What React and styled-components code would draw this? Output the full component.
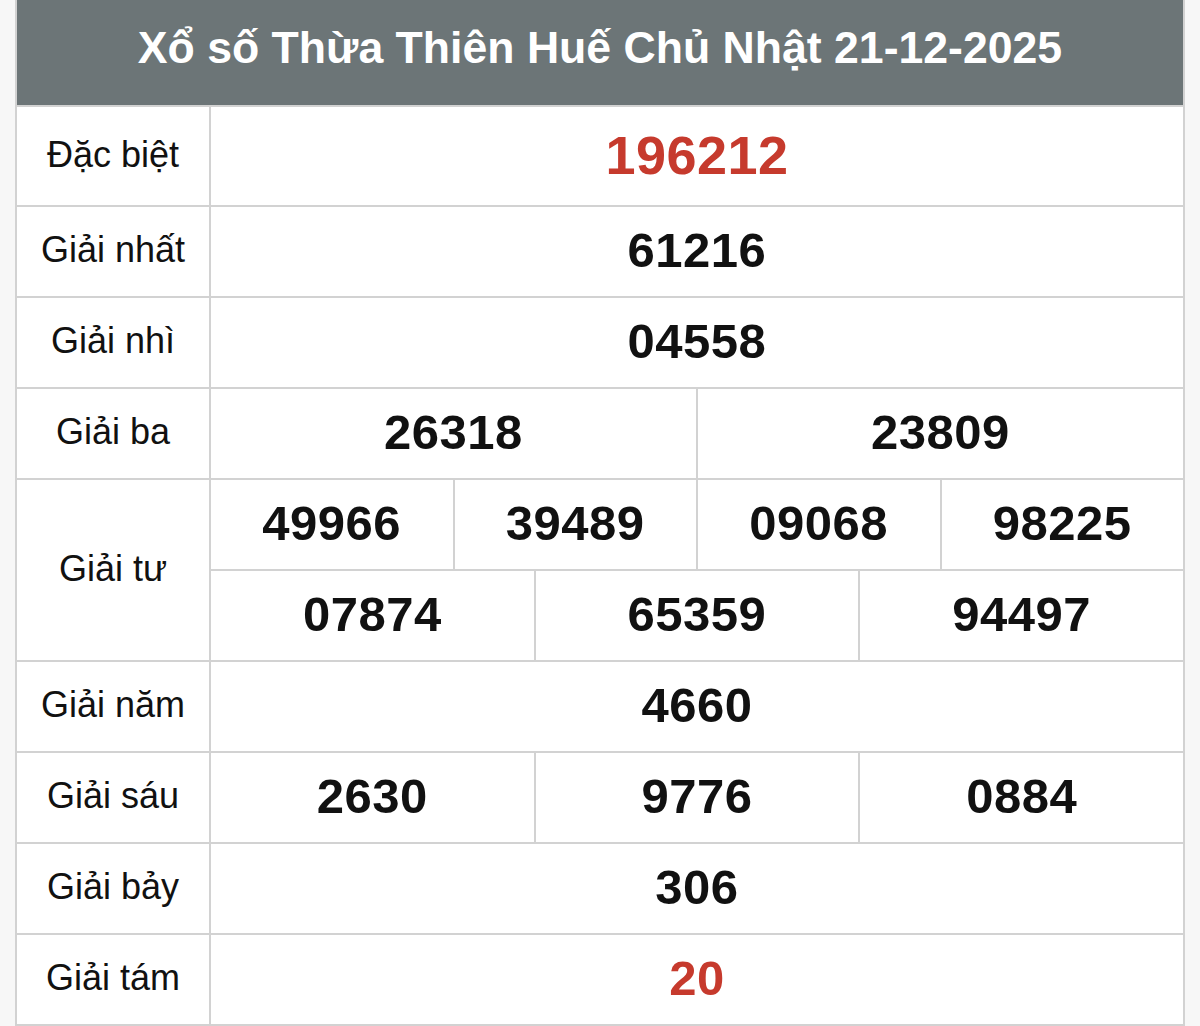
import styled, { createGlobalStyle } from "styled-components";

const GlobalStyle = createGlobalStyle`
  body {
    margin: 0;
    background: #f7f7f7;
    font-family: "Liberation Sans", Arial, sans-serif;
  }
`;

const Page = styled.div`
  padding: 0 15px;
`;

const Table = styled.div`
  display: grid;
  grid-template-columns: 192px 1fr;
  gap: 2px;
  background: #d2d2d2;
  border: 2px solid #d2d2d2;
  border-top: none;
`;

const Title = styled.h1`
  grid-column: 1 / -1;
  margin: 0;
  height: 105px;
  display: flex;
  align-items: center;
  justify-content: center;
  background: #6c7577;
  color: #fff;
  font-size: 44.6px;
  font-weight: 700;
  padding-bottom: 9px;
  box-sizing: border-box;
`;

const Label = styled.div`
  grid-row: span ${(p) => p.$span || 1};
  height: ${(p) => (p.$span ? "auto" : p.$tall ? "98px" : "89px")};
  display: flex;
  align-items: center;
  justify-content: center;
  padding-bottom: 3px;
  box-sizing: border-box;
  background: #fff;
  color: #111;
  font-size: 36px;
`;

const Values = styled.div`
  display: grid;
  grid-template-columns: repeat(${(p) => p.$cols}, 1fr);
  gap: 2px;
`;

const Value = styled.div`
  height: ${(p) => (p.$tall ? "98px" : "89px")};
  display: flex;
  align-items: center;
  justify-content: center;
  padding-bottom: 3px;
  box-sizing: border-box;
  background: #fff;
  color: ${(p) => (p.$red ? "#c63a2d" : "#111")};
  font-size: ${(p) => (p.$tall ? "54px" : "49px")};
  font-weight: 700;
  letter-spacing: 0.5px;
`;

const prizes = [
  { label: "Đặc biệt", rows: [["196212"]], red: true, tall: true },
  { label: "Giải nhất", rows: [["61216"]] },
  { label: "Giải nhì", rows: [["04558"]] },
  { label: "Giải ba", rows: [["26318", "23809"]] },
  {
    label: "Giải tư",
    rows: [
      ["49966", "39489", "09068", "98225"],
      ["07874", "65359", "94497"],
    ],
  },
  { label: "Giải năm", rows: [["4660"]] },
  { label: "Giải sáu", rows: [["2630", "9776", "0884"]] },
  { label: "Giải bảy", rows: [["306"]] },
  { label: "Giải tám", rows: [["20"]], red: true },
];

export default function App() {
  return (
    <Page>
      <GlobalStyle />
      <Table>
        <Title>Xổ số Thừa Thiên Huế Chủ Nhật 21-12-2025</Title>
        {prizes.map((prize) => [
          <Label
            key={prize.label}
            $tall={prize.tall}
            $span={prize.rows.length > 1 ? prize.rows.length : undefined}
          >
            {prize.label}
          </Label>,
          ...prize.rows.map((row, i) => (
            <Values key={prize.label + i} $cols={row.length}>
              {row.map((num) => (
                <Value key={num} $red={prize.red} $tall={prize.tall}>
                  {num}
                </Value>
              ))}
            </Values>
          )),
        ])}
      </Table>
    </Page>
  );
}
